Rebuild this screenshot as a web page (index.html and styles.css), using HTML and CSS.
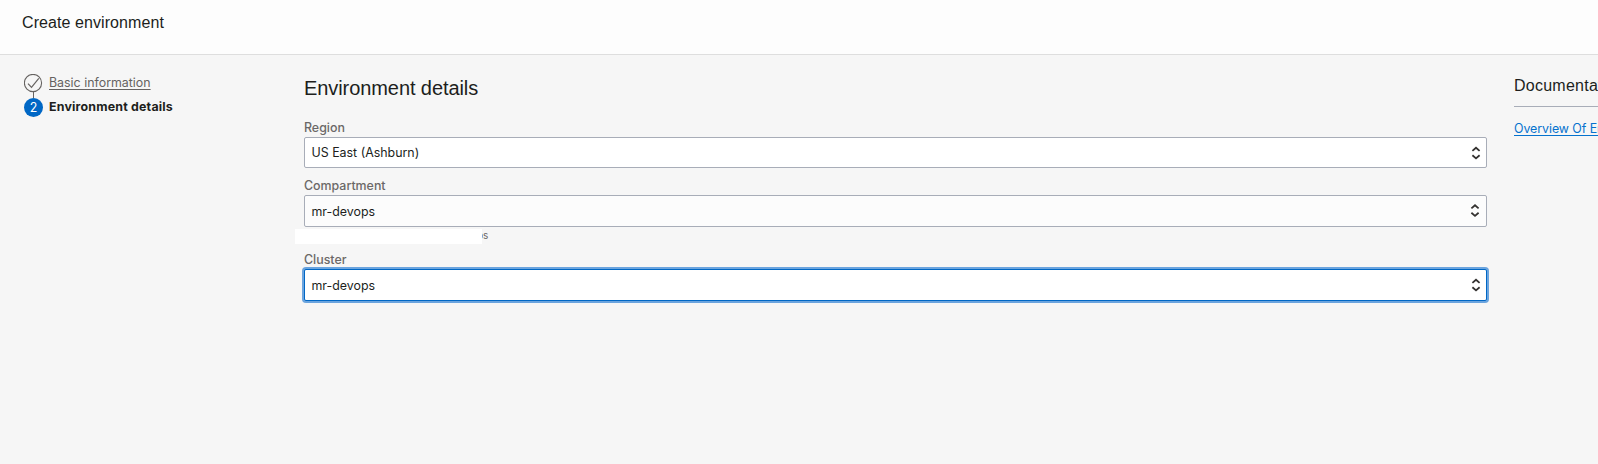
FILE: index.html
```html
<!DOCTYPE html>
<html lang="en">
<head>
<meta charset="utf-8">
<title>Create environment</title>
<link rel="stylesheet" href="styles.css">
</head>
<body>
<header class="header"><h1 class="header-title">Create environment</h1></header>
<main class="layout">
  <nav class="steps">
    <a class="step step-done">
      <svg class="step-icon" width="19" height="24" viewBox="0 0 19 24" fill="none" stroke="#666361">
        <circle cx="9" cy="9" r="8.6" stroke-width="1.1"/>
        <path d="M4 9.7 7.5 13.4 14.8 4.4" stroke-width="1.2"/>
        <path d="M9.5 18v6" stroke-width="1"/>
      </svg>
      <span class="step-link">Basic information</span>
    </a>
    <div class="step step-current">
      <span class="step-number">2</span>
      <span class="step-name">Environment details</span>
    </div>
  </nav>
  <section class="details">
    <h2 class="details-title">Environment details</h2>
    <div class="field field-region">
      <label class="label">Region</label>
      <div class="select"><span>US East (Ashburn)</span>
        <svg class="arrows" width="10" height="14" viewBox="0 0 10 14"><path d="M1.4 4.9 5 1.8 8.6 4.9M1.4 9.3 5 12.4 8.6 9.3"/></svg>
      </div>
    </div>
    <div class="field field-compartment">
      <label class="label">Compartment</label>
      <div class="select select-tinted"><span>mr-devops</span>
        <svg class="arrows" width="10" height="14" viewBox="0 0 10 14"><path d="M1.4 4.4 5 1.3 8.6 4.4M1.4 8.8 5 11.9 8.6 8.8"/></svg>
      </div>
      <div class="hint"><span class="hint-mask"></span><span class="hint-text">ps</span></div>
    </div>
    <div class="field field-cluster">
      <label class="label">Cluster</label>
      <div class="select select-focus"><span>mr-devops</span>
        <svg class="arrows" width="10" height="14" viewBox="0 0 10 14"><path d="M1.4 4.9 5 1.8 8.6 4.9M1.4 9.3 5 12.4 8.6 9.3"/></svg>
      </div>
    </div>
  </section>
  <aside class="docs">
    <h3 class="docs-title">Documentation</h3>
    <a class="docs-link">Overview Of Environments</a>
  </aside>
</main>
</body>
</html>
```
FILE: styles.css
```css
* { box-sizing: border-box; }
body {
  margin: 0;
  height: 464px;
  overflow: hidden;
  background: #f6f6f6;
  color: #201e1c;
  font-family: Inter, "Noto Sans", sans-serif;
  font-size: 12.4px;
}
h1, h2, h3 {
  margin: 0;
  font-family: "Liberation Sans", Arial, sans-serif;
  font-weight: 400;
}
.header {
  height: 55px;
  padding: 13px 22px 0;
  background: #fdfdfd;
  border-bottom: 1px solid #dedede;
}
.header-title { font-size: 16px; line-height: 20px; letter-spacing: 0.08px; }
.layout {
  display: grid;
  grid-template-columns: 280px 1183px 111px;
  padding-left: 24px;
}
.steps { padding-top: 19px; }
.step { display: flex; gap: 6px; height: 24px; white-space: nowrap; line-height: 18px; }
.step-icon { flex: none; }
.step-link {
  color: #666361;
  text-decoration: underline;
  text-underline-offset: 2px;
}
.step-number {
  flex: none;
  width: 19px;
  height: 19px;
  border-radius: 50%;
  background: #0067c5;
  color: #fff;
  text-align: center;
  line-height: 19px;
}
.step-name { font-weight: 700; letter-spacing: 0.19px; }
.details { padding-top: 21px; }
.details-title { font-size: 20px; line-height: 24px; letter-spacing: -0.08px; }
.field { display: flex; flex-direction: column; }
.field-region { margin-top: 19px; }
.field-compartment { margin-top: 9px; }
.field-cluster { margin-top: 7px; }
.label { height: 18px; line-height: 18px; font-weight: 500; color: #6b6867; }
.select {
  display: flex;
  align-items: center;
  justify-content: space-between;
  width: 1183px;
  height: 31px;
  padding: 0 5px 0 6.5px;
  border: 1px solid #a8adb8;
  border-radius: 2px;
  background: #fff;
}
.select-tinted { height: 32px; padding-right: 6px; background: #fcfcfc; }
.select-focus { height: 32px; border-color: #0067c5; box-shadow: 0 0 0 2px #6ba4de; }
.select-tinted span, .select-focus span { padding-top: 1px; }
.arrows { fill: none; stroke: #33312f; stroke-width: 1.8; }
.hint { display: flex; height: 15px; margin: 2px 0 0 -9px; }
.hint-mask { position: relative; width: 187px; height: 15px; background: #fff; }
.hint-text { margin-left: -5px; font-size: 10px; line-height: 12px; color: #6b6867; }
.docs { padding: 21px 0 0 27px; white-space: nowrap; overflow: hidden; }
.docs-title {
  height: 31px;
  font-size: 16px;
  line-height: 20px;
  letter-spacing: 0.25px;
  border-bottom: 1px solid #a8adb8;
}
.docs-link {
  display: block;
  margin-top: 13px;
  line-height: 18px;
  letter-spacing: -0.06px;
  color: #0572ce;
  text-decoration: underline;
  text-underline-offset: 2px;
}
```
